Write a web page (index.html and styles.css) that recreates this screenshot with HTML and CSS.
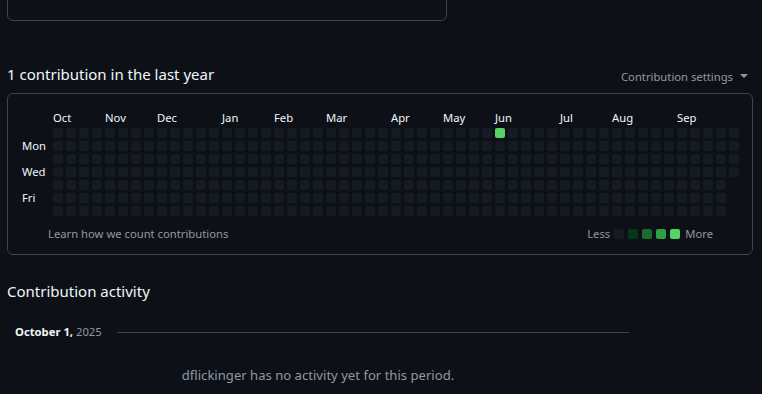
FILE: index.html
```html
<!DOCTYPE html>
<html lang="en">
<head>
    <meta charset="UTF-8">
    <meta name="viewport" content="width=device-width, initial-scale=1.0">
    <title>Contributions</title>
    <link rel="stylesheet" href="styles.css">
</head>
<body>
    <div class="wrap">
        <div class="pinned"></div>

        <div class="graph-head">
            <h2>1 contribution in the last year</h2>
            <span class="settings">Contribution settings <span class="caret"></span></span>
        </div>

        <div class="calendar">
            <div class="cal-body">
                <div class="days">
                    <span></span>
                    <span>Mon</span>
                    <span></span>
                    <span>Wed</span>
                    <span></span>
                    <span>Fri</span>
                    <span></span>
                </div>
                <div class="weeks">
                    <div id="months" class="months"></div>
                    <div id="cells" class="cells"></div>
                </div>
            </div>
            <div class="cal-foot">
                <a href="#">Learn how we count contributions</a>
                <div class="legend">
                    <span>Less</span>
                    <i class="lv0"></i><i class="lv1"></i><i class="lv2"></i><i class="lv3"></i><i class="lv4"></i>
                    <span>More</span>
                </div>
            </div>
        </div>

        <h2 class="activity-title">Contribution activity</h2>
        <div class="activity">
            <div class="period">
                <h3><b>October 1,</b> <span>2025</span></h3>
                <div class="rule"></div>
            </div>
            <p class="empty">dflickinger has no activity yet for this period.</p>
        </div>
    </div>

    <script>
        // месяцы: номер недели, с которой начинается подпись
        const months = [
            ['Oct', 0], ['Nov', 4], ['Dec', 8], ['Jan', 13], ['Feb', 17], ['Mar', 21],
            ['Apr', 26], ['May', 30], ['Jun', 34], ['Jul', 39], ['Aug', 43], ['Sep', 48]
        ];
        const monthRow = document.getElementById('months');
        months.forEach(m => {
            const el = document.createElement('span');
            el.textContent = m[0];
            el.style.gridColumn = (m[1] + 1) + ' / span 4';
            monthRow.appendChild(el);
        });

        const weeks = 53;
        const cells = document.getElementById('cells');
        for (let w = 0; w < weeks; w++) {
            const days = w === weeks - 1 ? 4 : 7;
            for (let d = 0; d < days; d++) {
                const c = document.createElement('i');
                c.className = (w === 34 && d === 0) ? 'lv4' : 'lv0';
                c.style.gridColumn = w + 1;
                c.style.gridRow = d + 1;
                cells.appendChild(c);
            }
        }
    </script>
</body>
</html>
```

FILE: styles.css
```css
body {
    margin: 0;
    background-color: #0d1117;
    color: #f0f6fc;
    font-family: 'Noto Sans', 'Liberation Sans', sans-serif;
    overflow: hidden;
}
.wrap {
    width: 746px;
    padding-left: 7px;
}
.pinned {
    box-sizing: border-box;
    width: 440px;
    height: 40px;
    margin-top: -19px;
    border: 1px solid #3d444d;
    border-radius: 6px;
}
.graph-head {
    display: flex;
    justify-content: space-between;
    align-items: center;
    margin-top: 41px;
    margin-bottom: 7px;
}
h2 {
    margin: 0;
    font-size: 15px;
    font-weight: 400;
    line-height: 24px;
}
.settings {
    color: #9198a1;
    font-size: 11.25px;
    margin-top: 4px;
    margin-right: 5px;
    display: flex;
    align-items: center;
    gap: 4px;
}
.caret {
    width: 0;
    height: 0;
    margin-left: 3px;
    border-left: 4px solid transparent;
    border-right: 4px solid transparent;
    border-top: 4px solid #9198a1;
}
.calendar {
    box-sizing: border-box;
    border: 1px solid #3d444d;
    border-radius: 6px;
    padding: 16px 0 13px 14px;
}
.cal-body {
    display: flex;
    align-items: flex-end;
    gap: 3px;
}
.days {
    width: 28px;
    display: grid;
    grid-template-rows: repeat(7, 10px);
    row-gap: 3px;
    font-size: 11.25px;
    line-height: 10px;
}
.months {
    display: grid;
    grid-template-columns: repeat(53, 10px);
    column-gap: 3px;
    height: 15px;
    margin-bottom: 3px;
    font-size: 11.25px;
    line-height: 15px;
    white-space: nowrap;
}
.cells {
    display: grid;
    grid-template-columns: repeat(53, 10px);
    grid-template-rows: repeat(7, 10px);
    gap: 3px;
}
.cells i, .legend i {
    display: block;
    width: 10px;
    height: 10px;
    border-radius: 2px;
}
.lv0 { background-color: #151b23; }
.lv1 { background-color: #033a16; }
.lv2 { background-color: #196c2e; }
.lv3 { background-color: #2ea043; }
.lv4 { background-color: #56d364; }
.cal-foot {
    display: flex;
    justify-content: space-between;
    align-items: center;
    margin: 10px 39px 0 26px;
    font-size: 11.25px;
    line-height: 15px;
    color: #9198a1;
}
.cal-foot a {
    color: #9198a1;
    text-decoration: none;
}
.legend {
    display: flex;
    align-items: center;
    gap: 4px;
}
.legend span:last-child {
    margin-left: 1px;
}
.activity-title {
    margin-top: 24px;
}
.activity {
    width: 622px;
}
.period {
    display: flex;
    align-items: center;
    padding-left: 8px;
    margin-top: 20px;
}
.period h3 {
    margin: 0;
    font-size: 11.25px;
    line-height: 18px;
    font-weight: 600;
}
.period h3 b {
    font-weight: 700;
}
.period h3 span {
    color: #9198a1;
    font-weight: 400;
}
.rule {
    flex: 1;
    height: 1px;
    margin-left: 15px;
    background-color: #3d444d;
}
.empty {
    margin: 24px 0 0;
    text-align: center;
    font-size: 13.1px;
    line-height: 20px;
    color: #9198a1;
}
```
